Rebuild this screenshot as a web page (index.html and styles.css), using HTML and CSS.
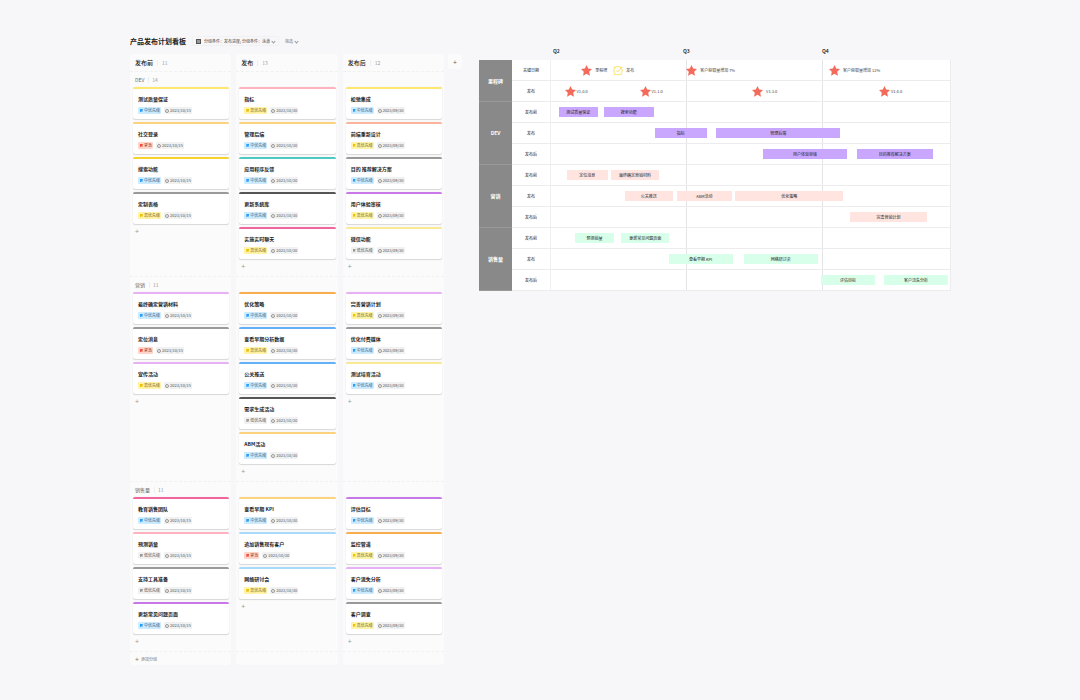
FILE: index.html
```html
<!DOCTYPE html>
<html lang="zh-CN">
<head>
<meta charset="utf-8">
<title>产品发布计划看板</title>
<link rel="stylesheet" href="styles.css">
</head>
<body>
<svg class="sprite" aria-hidden="true">
  <symbol id="star" viewBox="0 0 24 24"><path d="M12 0l3.700 7.900 8.300 1-6.100 5.900 1.600 8.700L12 19.300 4.500 23.500l1.600-8.700L0 8.900l8.300-1z"/></symbol>
  <symbol id="clock" viewBox="0 0 24 24"><path d="M12 2.500a10 10 0 1 0 0 20a10 10 0 1 0 0-20M8 12l3.500 3.500L20 5M1.500 6L5 2M19 2l3.500 4M5 20l-2.500 3M19 20l2.500 3"/></symbol>
</svg>
<main class="canvas">
<section class="kanban">
  <header class="bar">
    <h1>产品发布计划看板</h1>
    <button class="group-by"><i class="grid-icon"></i>分组条件：发布进度; 分组条件：泳道<i class="caret"></i></button>
    <button class="filter">筛选<i class="caret"></i></button>
  </header>
  <div class="board-wrap">
  <div class="board">
    <h2>发布前<span>11</span></h2><h2>发布<span>13</span></h2><h2>发布后<span>12</span></h2>

    <div class="lane"><h3>DEV<span>14</span></h3>
      <article class="card lemon"><h4>测试质量保证</h4><p><b class="blue">中优先级</b><time>2023/10/15</time></p></article>
      <article class="card amber"><h4>社交登录</h4><p><b class="red">紧急</b><time>2023/10/15</time></p></article>
      <article class="card gold"><h4>搜索功能</h4><p><b class="blue">中优先级</b><time>2023/10/15</time></p></article>
      <article class="card gray"><h4>定制表格</h4><p><b class="yellow">高优先级</b><time>2023/10/15</time></p></article>
      <button class="add">+</button></div>
    <div class="lane"><h3></h3>
      <article class="card pink"><h4>指标</h4><p><b class="yellow">高优先级</b><time>2023/10/30</time></p></article>
      <article class="card amber"><h4>管理后端</h4><p><b class="blue">中优先级</b><time>2023/10/30</time></p></article>
      <article class="card teal"><h4>应用程序反馈</h4><p><b class="blue">中优先级</b><time>2023/10/30</time></p></article>
      <article class="card dark"><h4>更新系统库</h4><p><b class="blue">中优先级</b><time>2023/10/30</time></p></article>
      <article class="card rose"><h4>实施实时聊天</h4><p><b class="yellow">高优先级</b><time>2023/10/30</time></p></article>
      <button class="add">+</button></div>
    <div class="lane"><h3></h3>
      <article class="card lemon"><h4>松弛集成</h4><p><b class="blue">中优先级</b><time>2023/09/30</time></p></article>
      <article class="card salmon"><h4>前端重新设计</h4><p><b class="yellow">高优先级</b><time>2023/09/30</time></p></article>
      <article class="card gray"><h4>目的 推荐解决方案</h4><p><b class="blue">中优先级</b><time>2023/09/30</time></p></article>
      <article class="card purple"><h4>用户体验审核</h4><p><b class="yellow">高优先级</b><time>2023/09/30</time></p></article>
      <article class="card cream"><h4>微信功能</h4><p><b class="none">低优先级</b><time>2023/09/30</time></p></article>
      <button class="add">+</button></div>

    <div class="lane"><h3>营销<span>11</span></h3>
      <article class="card lilac"><h4>最终确定营销材料</h4><p><b class="blue">中优先级</b><time>2023/10/15</time></p></article>
      <article class="card gray"><h4>定位消息</h4><p><b class="red">紧急</b><time>2023/10/15</time></p></article>
      <article class="card lilac"><h4>宣传活动</h4><p><b class="yellow">高优先级</b><time>2023/10/15</time></p></article>
      <button class="add">+</button></div>
    <div class="lane"><h3></h3>
      <article class="card orange"><h4>优化策略</h4><p><b class="blue">中优先级</b><time>2023/10/30</time></p></article>
      <article class="card azure"><h4>查看早期分析数据</h4><p><b class="yellow">高优先级</b><time>2023/10/30</time></p></article>
      <article class="card azure"><h4>公关推送</h4><p><b class="blue">中优先级</b><time>2023/10/30</time></p></article>
      <article class="card dark"><h4>需求生成活动</h4><p><b class="none">低优先级</b><time>2023/10/30</time></p></article>
      <article class="card amber"><h4>ABM活动</h4><p><b class="blue">中优先级</b><time>2023/10/30</time></p></article>
      <button class="add">+</button></div>
    <div class="lane"><h3></h3>
      <article class="card lilac"><h4>完善营销计划</h4><p><b class="yellow">高优先级</b><time>2023/09/30</time></p></article>
      <article class="card gray"><h4>优化付费媒体</h4><p><b class="blue">中优先级</b><time>2023/09/30</time></p></article>
      <article class="card cream"><h4>测试培育活动</h4><p><b class="blue">中优先级</b><time>2023/09/30</time></p></article>
      <button class="add">+</button></div>

    <div class="lane"><h3>销售量<span>11</span></h3>
      <article class="card rose"><h4>教育销售团队</h4><p><b class="blue">中优先级</b><time>2023/10/15</time></p></article>
      <article class="card pink"><h4>预测销量</h4><p><b class="none">低优先级</b><time>2023/10/15</time></p></article>
      <article class="card gray"><h4>支持工具准备</h4><p><b class="none">低优先级</b><time>2023/10/15</time></p></article>
      <article class="card purple"><h4>更新常见问题页面</h4><p><b class="blue">中优先级</b><time>2023/10/15</time></p></article>
      <button class="add">+</button></div>
    <div class="lane"><h3></h3>
      <article class="card amber"><h4>查看早期 KPI</h4><p><b class="blue">中优先级</b><time>2023/10/30</time></p></article>
      <article class="card sky"><h4>追加销售现有客户</h4><p><b class="red">紧急</b><time>2023/10/30</time></p></article>
      <article class="card sky"><h4>网络研讨会</h4><p><b class="yellow">高优先级</b><time>2023/10/30</time></p></article>
      <button class="add">+</button></div>
    <div class="lane"><h3></h3>
      <article class="card purple"><h4>评估目标</h4><p><b class="blue">中优先级</b><time>2023/09/30</time></p></article>
      <article class="card orange"><h4>监控管道</h4><p><b class="yellow">高优先级</b><time>2023/09/30</time></p></article>
      <article class="card lilac"><h4>客户流失分析</h4><p><b class="blue">中优先级</b><time>2023/09/30</time></p></article>
      <article class="card gray"><h4>客户调查</h4><p><b class="yellow">高优先级</b><time>2023/09/30</time></p></article>
      <button class="add">+</button></div>

    <div class="foot"><button class="add-group"><span>+</span>添加分组</button></div><div class="foot"></div><div class="foot"></div>
  </div>
  <button class="add-column">+</button>
  </div>
</section>

<section class="roadmap">
  <div class="quarters"><span>Q2</span><span>Q3</span><span>Q4</span></div>
  <div class="groups">
    <div class="group"><h3>里程碑</h3><div class="rows">
      <div class="row"><h4>关键日期</h4><div class="track">
        <span class="mark wide" style="left:7.6%"><svg><use href="#star"/></svg>里程碑</span>
        <span class="mark wide clock" style="left:15.6%"><svg><use href="#clock"/></svg>发布</span>
        <span class="mark wide" style="left:33.9%"><svg><use href="#star"/></svg>客户获取量增加 7%</span>
        <span class="mark wide" style="left:69.7%"><svg><use href="#star"/></svg>客户获取量增加 12%</span></div></div>
      <div class="row"><h4>发布</h4><div class="track">
        <span class="mark" style="left:3.4%"><svg><use href="#star"/></svg>V1.0.0</span>
        <span class="mark" style="left:22.2%"><svg><use href="#star"/></svg>V1.1.0</span>
        <span class="mark wide" style="left:50.4%"><svg><use href="#star"/></svg>V1.3.0</span>
        <span class="mark" style="left:82.2%"><svg><use href="#star"/></svg>V1.4.0</span></div></div>
    </div></div>
    <div class="group dev"><h3>DEV</h3><div class="rows">
      <div class="row"><h4>发布前</h4><div class="track"><span class="task" style="left:1.9%;width:9.9%">测试质量保证</span><span class="task" style="left:13.3%;width:12.4%">搜索功能</span></div></div>
      <div class="row"><h4>发布</h4><div class="track"><span class="task" style="left:26%;width:13%">指标</span><span class="task" style="left:41.4%;width:31.1%">管理后端</span></div></div>
      <div class="row"><h4>发布后</h4><div class="track"><span class="task" style="left:53.1%;width:21.1%">用户体验审核</span><span class="task" style="left:76.6%;width:19.1%">目的推荐解决方案</span></div></div>
    </div></div>
    <div class="group marketing"><h3>营销</h3><div class="rows">
      <div class="row"><h4>发布前</h4><div class="track"><span class="task" style="left:4%;width:10.2%">定位消息</span><span class="task" style="left:15.1%;width:11.9%">最终确定营销材料</span></div></div>
      <div class="row"><h4>发布</h4><div class="track"><span class="task" style="left:18.5%;width:12%">公关推送</span><span class="task" style="left:31.5%;width:13.9%">ABM活动</span><span class="task" style="left:46.1%;width:27.2%">优化策略</span></div></div>
      <div class="row"><h4>发布后</h4><div class="track"><span class="task" style="left:75%;width:19.2%">完善营销计划</span></div></div>
    </div></div>
    <div class="group sales"><h3>销售量</h3><div class="rows">
      <div class="row"><h4>发布前</h4><div class="track"><span class="task" style="left:6%;width:9.8%">预测销量</span><span class="task" style="left:17.5%;width:12.2%">更新常见问题页面</span></div></div>
      <div class="row"><h4>发布</h4><div class="track"><span class="task" style="left:29.5%;width:16%">查看早期 KPI</span><span class="task" style="left:48.3%;width:18.6%">网络研讨会</span></div></div>
      <div class="row"><h4>发布后</h4><div class="track"><span class="task" style="left:67.6%;width:13.7%">评估目标</span><span class="task" style="left:83.5%;width:16%">客户流失分析</span></div></div>
    </div></div>
  </div>
</section>
</main>
</body>
</html>
```
FILE: styles.css
```css
*, *::before { box-sizing: border-box; margin: 0; padding: 0; }
body { background: #f7f7f9; color: #222; font: 4px/8px "Noto Sans CJK SC", "Noto Sans", sans-serif; }
button { border: 0; background: none; font: inherit; color: inherit; white-space: nowrap; }
.sprite { display: none; }
.canvas { display: grid; grid-template-columns: 332fr 472fr; column-gap: 17px; align-items: start; padding: 34px 129px 36px 130px; }

.bar { display: flex; align-items: center; height: 14px; gap: 6px; margin-bottom: 6px; }
.bar h1 { font-size: 7px; font-weight: 700; white-space: nowrap; }
.bar button { display: flex; align-items: center; gap: 2px; height: 10px; padding: 0 3px; color: #444; border-radius: 2px; }
.bar .group-by { border: 1px solid #f1f1f2; }
.bar .filter { padding: 0; color: #777; }
.grid-icon { width: 5px; height: 5px; margin-right: 1px; border: 1px solid #555; background: #999; }
.caret { width: 3px; height: 3px; border: solid #999; border-width: 0 1px 1px 0; transform: rotate(45deg); }

.board-wrap { display: flex; align-items: flex-start; gap: 4px; }
.board { flex: 1; display: grid; grid-template-columns: repeat(3, 1fr); column-gap: 5px; }
.board > * { background: #fbfbfb; padding: 0 2px 0 3px; }
.board h2 { display: flex; align-items: center; height: 17px; padding-left: 5px; font-size: 6px; font-weight: 500; border-radius: 3px 3px 0 0; }
h2 span, .lane h3 span { margin-left: 4px; padding-left: 3px; border-left: 1px solid #eee; color: #999; font-size: 5px; font-weight: 400; line-height: 6px; }
.board h2 span { padding-left: 4px; }
.lane { display: flex; flex-direction: column; gap: 3px; border-top: 1px dashed #f1f1f1; }
.lane h3 { display: flex; align-items: center; height: 12px; padding: 4px 2px 0; color: #666; font-size: 5px; font-weight: 400; }
.card { padding: 6px 5px 5px; background: #fff; border-top: 2px solid; border-radius: 2px; box-shadow: 0 1px 1px #0002, 0 0 1px #0002; }
.card h4 { margin-bottom: 4px; color: #222; font-size: 5px; font-weight: 700; line-height: 8px; }
.card p { display: flex; gap: 3px; line-height: 7px; }
.card b, .card time { display: flex; align-items: center; height: 7px; padding: 0 1px 0 2px; border-radius: 1px; font-weight: 400; }
.card b::before { content: ""; width: 3px; height: 3px; margin-right: 1px; background: var(--flag); clip-path: polygon(0 0, 100% 0, 80% 40%, 100% 80%, 30% 80%, 30% 100%, 0 100%); }
.card time { padding: 0 1px; background: #f1f1f1; color: #555; }
.card time::before { content: ""; width: 4px; height: 4px; margin-right: 1px; border: 1px solid #999; border-radius: 50%; }
.blue { --flag: #2a9df4; background: #cdebff; color: #36607c; }
.yellow { --flag: #f0c000; background: #fff3a8; color: #706422; }
.red { --flag: #f0513c; background: #ffd5ca; color: #933c2a; }
.none { --flag: #999; background: #f1f1f1; color: #555; }
.lemon { border-color: #fde76c; } .amber { border-color: #fcd27c; } .gold { border-color: #f8d22c; }
.gray { border-color: #999; } .dark { border-color: #555; } .pink { border-color: #ffb3c0; }
.teal { border-color: #4dc9c4; } .rose { border-color: #f0659b; } .salmon { border-color: #fab49c; }
.purple { border-color: #c877e8; } .lilac { border-color: #e8b0f5; } .cream { border-color: #fbea94; }
.orange { border-color: #f8ae4c; } .azure { border-color: #62b0f8; } .sky { border-color: #a8dafa; }
.add { align-self: flex-start; height: 14px; padding: 0 2px 6px; color: #999; font-size: 7px; line-height: 8px; }
.foot { height: 14px; border-top: 1px dashed #f1f1f1; border-radius: 0 0 3px 3px; }
.add-group { display: flex; align-items: center; gap: 2px; height: 13px; padding: 0 2px; color: #777; }
.add-group span { font-size: 7px; }
.add-column { width: 14px; height: 15px; background: #fbfbfb; border-radius: 3px; color: #666; font-size: 7px; }

.roadmap { padding-top: 12px; }
.quarters { display: grid; grid-template-columns: 72px 135fr 139fr 126fr; height: 14px; font-size: 5px; font-weight: 600; line-height: 10px; color: #333; }
.quarters span:first-child { grid-column: 2; padding-left: 2px; }
.quarters span + span { margin-left: -3px; }
.group { display: grid; grid-template-columns: 33px 1fr; }
.group h3 { display: grid; place-items: center; background: #898989; border-bottom: 1px solid #999; color: #fff; font-size: 5px; font-weight: 700; }
.row { display: grid; grid-template-columns: 39px 1fr; height: 21px; background: #fff; border-bottom: 1px solid #ececee; }
.row h4 { display: grid; place-items: center; border-right: 1px solid #f0f0f2; font-weight: 400; color: #222; }
.track { position: relative; display: flex; align-items: center; border-right: 1px solid #ececee; background: linear-gradient(#e4e4e6, #e4e4e6) 34% 0 / 1px 100% no-repeat, linear-gradient(#e4e4e6, #e4e4e6) 68% 0 / 1px 100% no-repeat; }
.task, .mark { position: absolute; white-space: nowrap; color: #222; }
.task { height: 10px; line-height: 10px; text-align: center; }
.mark { display: flex; align-items: center; gap: 1px; color: #444; }
.mark.wide { gap: 3px; }
.mark svg { width: 11px; height: 11px; fill: #f26b5b; }
.mark.clock svg { width: 10px; fill: none; stroke: #f5dc4a; stroke-width: 2; }
.dev .task { background: #c9a7ff; }
.marketing .task { background: #ffe4e0; }
.sales .task { background: #d8ffea; }
```
